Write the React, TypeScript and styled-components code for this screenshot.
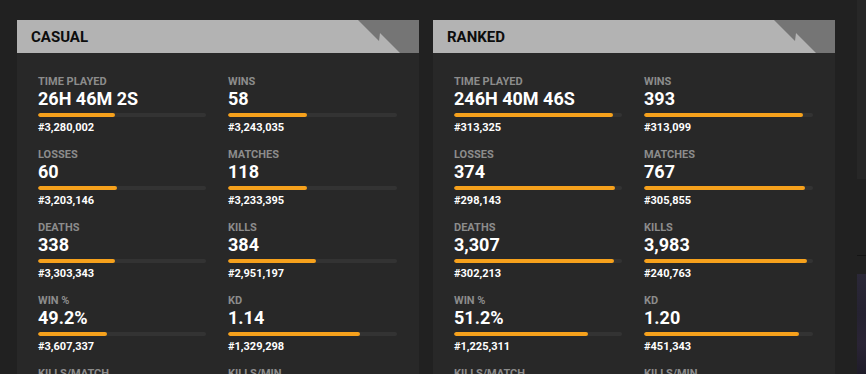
import * as React from "react";
import styled, { createGlobalStyle } from "styled-components";

type Stat = {
  label: string;
  value: string;
  rank: string;
  pct: number;
};

type Mode = {
  title: string;
  stats: Stat[];
};

const modes: Mode[] = [
  {
    title: "CASUAL",
    stats: [
      { label: "TIME PLAYED", value: "26H 46M 2S", rank: "#3,280,002", pct: 46 },
      { label: "WINS", value: "58", rank: "#3,243,035", pct: 47 },
      { label: "LOSSES", value: "60", rank: "#3,203,146", pct: 47 },
      { label: "MATCHES", value: "118", rank: "#3,233,395", pct: 47 },
      { label: "DEATHS", value: "338", rank: "#3,303,343", pct: 46 },
      { label: "KILLS", value: "384", rank: "#2,951,197", pct: 52 },
      { label: "WIN %", value: "49.2%", rank: "#3,607,337", pct: 41 },
      { label: "KD", value: "1.14", rank: "#1,329,298", pct: 78 },
      { label: "KILLS/MATCH", value: "3.25", rank: "#1,622,408", pct: 70 },
      { label: "KILLS/MIN", value: "0.24", rank: "#1,890,112", pct: 60 },
    ],
  },
  {
    title: "RANKED",
    stats: [
      { label: "TIME PLAYED", value: "246H 40M 46S", rank: "#313,325", pct: 94.5 },
      { label: "WINS", value: "393", rank: "#313,099", pct: 94 },
      { label: "LOSSES", value: "374", rank: "#298,143", pct: 96 },
      { label: "MATCHES", value: "767", rank: "#305,855", pct: 95 },
      { label: "DEATHS", value: "3,307", rank: "#302,213", pct: 95 },
      { label: "KILLS", value: "3,983", rank: "#240,763", pct: 96.4 },
      { label: "WIN %", value: "51.2%", rank: "#1,225,311", pct: 80 },
      { label: "KD", value: "1.20", rank: "#451,343", pct: 92 },
      { label: "KILLS/MATCH", value: "5.19", rank: "#280,114", pct: 90 },
      { label: "KILLS/MIN", value: "0.27", rank: "#512,870", pct: 85 },
    ],
  },
];

const GlobalStyle = createGlobalStyle`
  html, body {
    margin: 0;
    padding: 0;
    background: #212121;
    overflow: hidden;
  }
  body {
    font-family: Roboto, "Liberation Sans", sans-serif;
  }
`;

const Corner: React.FC = () => (
  <CornerSvg viewBox="0 0 61 33" width="61" height="33">
    <polygon points="0,0 21,21 22,13 42,33 61,33 61,0" fill="#757575" />
  </CornerSvg>
);

const StatBlock: React.FC<{ stat: Stat }> = ({ stat }) => (
  <StatItem>
    <Label>{stat.label}</Label>
    <Value>{stat.value}</Value>
    <Track>
      <Fill style={{ width: `${stat.pct}%` }} />
    </Track>
    <Rank>{stat.rank}</Rank>
  </StatItem>
);

const App: React.FC = () => {
  return (
    <Page>
      <GlobalStyle />
      {modes.map((mode) => (
        <Card key={mode.title}>
          <Header>
            <Title>{mode.title}</Title>
            <Corner />
          </Header>
          <Body>
            {mode.stats.map((stat) => (
              <StatBlock key={stat.label} stat={stat} />
            ))}
          </Body>
        </Card>
      ))}
      <Sidebar>
        <SidePanel />
        <SideRule />
        <SideImage />
      </Sidebar>
    </Page>
  );
};

const Page = styled.main`
  display: flex;
  align-items: flex-start;
  gap: 14px;
  padding: 20px 0 0 17px;
  height: 374px;
  box-sizing: border-box;
`;

const Card = styled.section`
  width: 402px;
  flex-shrink: 0;
  background: #282828;
  height: 420px;
`;

const Header = styled.header`
  position: relative;
  height: 33px;
  background: #b3b3b3;
  display: flex;
  align-items: center;
  padding-left: 14px;
  overflow: hidden;
`;

const Title = styled.h2`
  margin: 0;
  font-size: 15px;
  line-height: 18px;
  font-weight: 700;
  color: #0d0d0d;
  letter-spacing: 0;
`;

const CornerSvg = styled.svg`
  position: absolute;
  top: 0;
  right: 0;
  display: block;
`;

const Body = styled.div`
  display: grid;
  grid-template-columns: 168px 169px;
  column-gap: 22px;
  row-gap: 14px;
  padding: 22px 22px 0 21px;
`;

const StatItem = styled.div`
  display: flex;
  flex-direction: column;
`;

const Label = styled.div`
  font-size: 11px;
  line-height: 13px;
  font-weight: 700;
  color: #8c8c8c;
`;

const Value = styled.div`
  font-size: 18px;
  line-height: 22px;
  font-weight: 700;
  color: #ffffff;
`;

const Track = styled.div`
  margin-top: 3px;
  height: 4px;
  border-radius: 2px;
  background: #333333;
  overflow: hidden;
`;

const Fill = styled.div`
  height: 100%;
  border-radius: 2px;
  background: #f6a11c;
`;

const Rank = styled.div`
  margin-top: 4px;
  font-size: 11px;
  line-height: 13px;
  font-weight: 700;
  color: #ffffff;
`;

const Sidebar = styled.aside`
  flex: 1;
  margin-top: -20px;
  margin-left: 8px;
  display: flex;
  flex-direction: column;
  height: 374px;
`;

const SidePanel = styled.div`
  height: 179px;
  background: #272727;
`;

const SideRule = styled.div`
  margin-top: 76px;
  height: 1px;
  background: #151515;
`;

const SideImage = styled.div`
  margin-top: 18px;
  flex: 1;
  background: linear-gradient(180deg, #2b2838 0%, #252231 40%, #2a2435 70%, #1f1c29 100%);
`;

export default App;
